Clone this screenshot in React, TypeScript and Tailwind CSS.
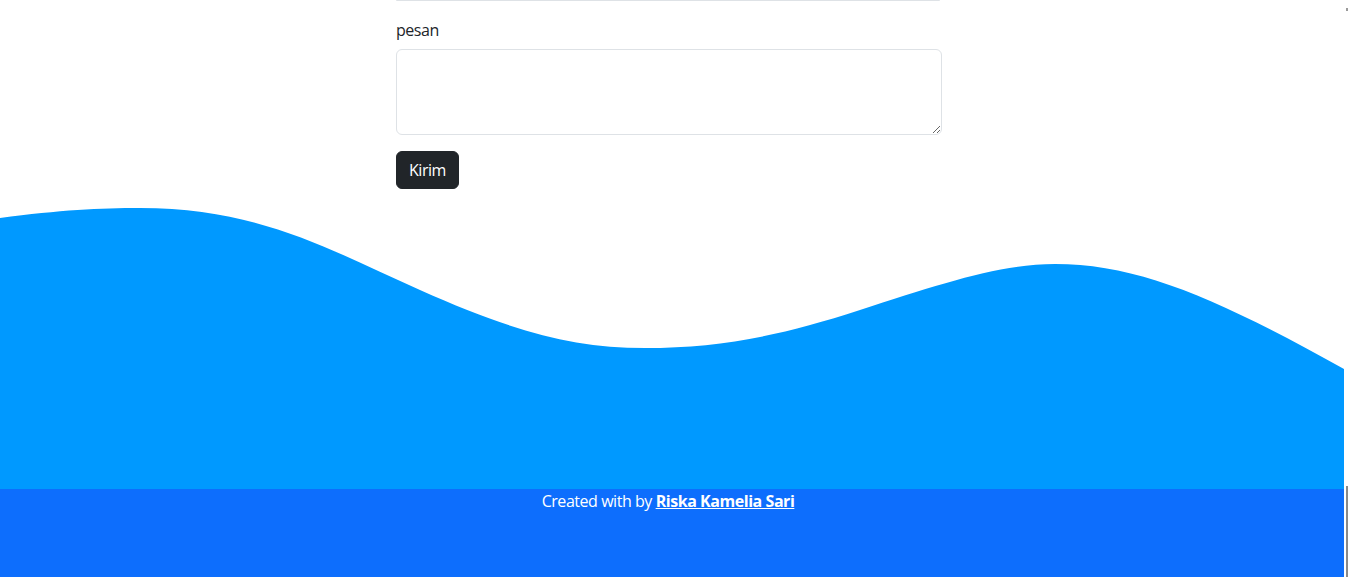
export default function App() {
  return (
    <div className="relative w-[1348px] h-[584px] overflow-hidden bg-white text-[#212529] text-[16px] leading-[24px] tracking-[-0.45px] font-['Segoe_UI','Open_Sans','Noto_Sans',sans-serif]">
      <div className="flex">
        <div className="w-[1344px] flex flex-col">
          <div className="ml-[396px] w-[546px] flex flex-col">
            <div className="h-[1px] w-[544px] border-b border-[#dee2e6] rounded-b-[6px] mb-4" />
            <label className="mb-2 h-[24px] pt-[1px]">pesan</label>
            <textarea
              rows={3}
              className="w-[546px] h-[86px] border border-[#dee2e6] rounded-[6px] px-3 py-[6px] bg-white mb-4 outline-none"
            />
            <button className="self-start h-[38px] px-3 bg-[#212529] text-white rounded-[6px] border border-[#212529]">
              Kirim
            </button>
          </div>
          <svg className="block mt-[11px]" width="1344" height="289" viewBox="0 0 1344 289">
            <path
              fill="#0099ff"
              d="M0,18 C60,10 100,8 140,8 C260,8 330,50 420,90 C510,130 570,148 645,148 C720,148 780,136 860,110 C940,84 1000,64 1055,64 C1140,64 1220,100 1344,169 L1344,289 L0,289 Z"
            />
          </svg>
          <footer className="h-[88px] bg-[#0d6efd] text-white text-center pr-[8px]">
            Created with by{' '}
            <a href="#" className="font-bold underline text-white">
              Riska Kamelia Sari
            </a>
          </footer>
        </div>
        <div className="w-[4px]" />
      </div>
      <div className="absolute left-[1346px] top-[486px] w-[2px] h-[91px] bg-[#8a8a8a]" />
      <div className="absolute left-[1346px] top-[8px] w-[2px] h-[3px] bg-[#9a9a9a]" />
    </div>
  );
}
